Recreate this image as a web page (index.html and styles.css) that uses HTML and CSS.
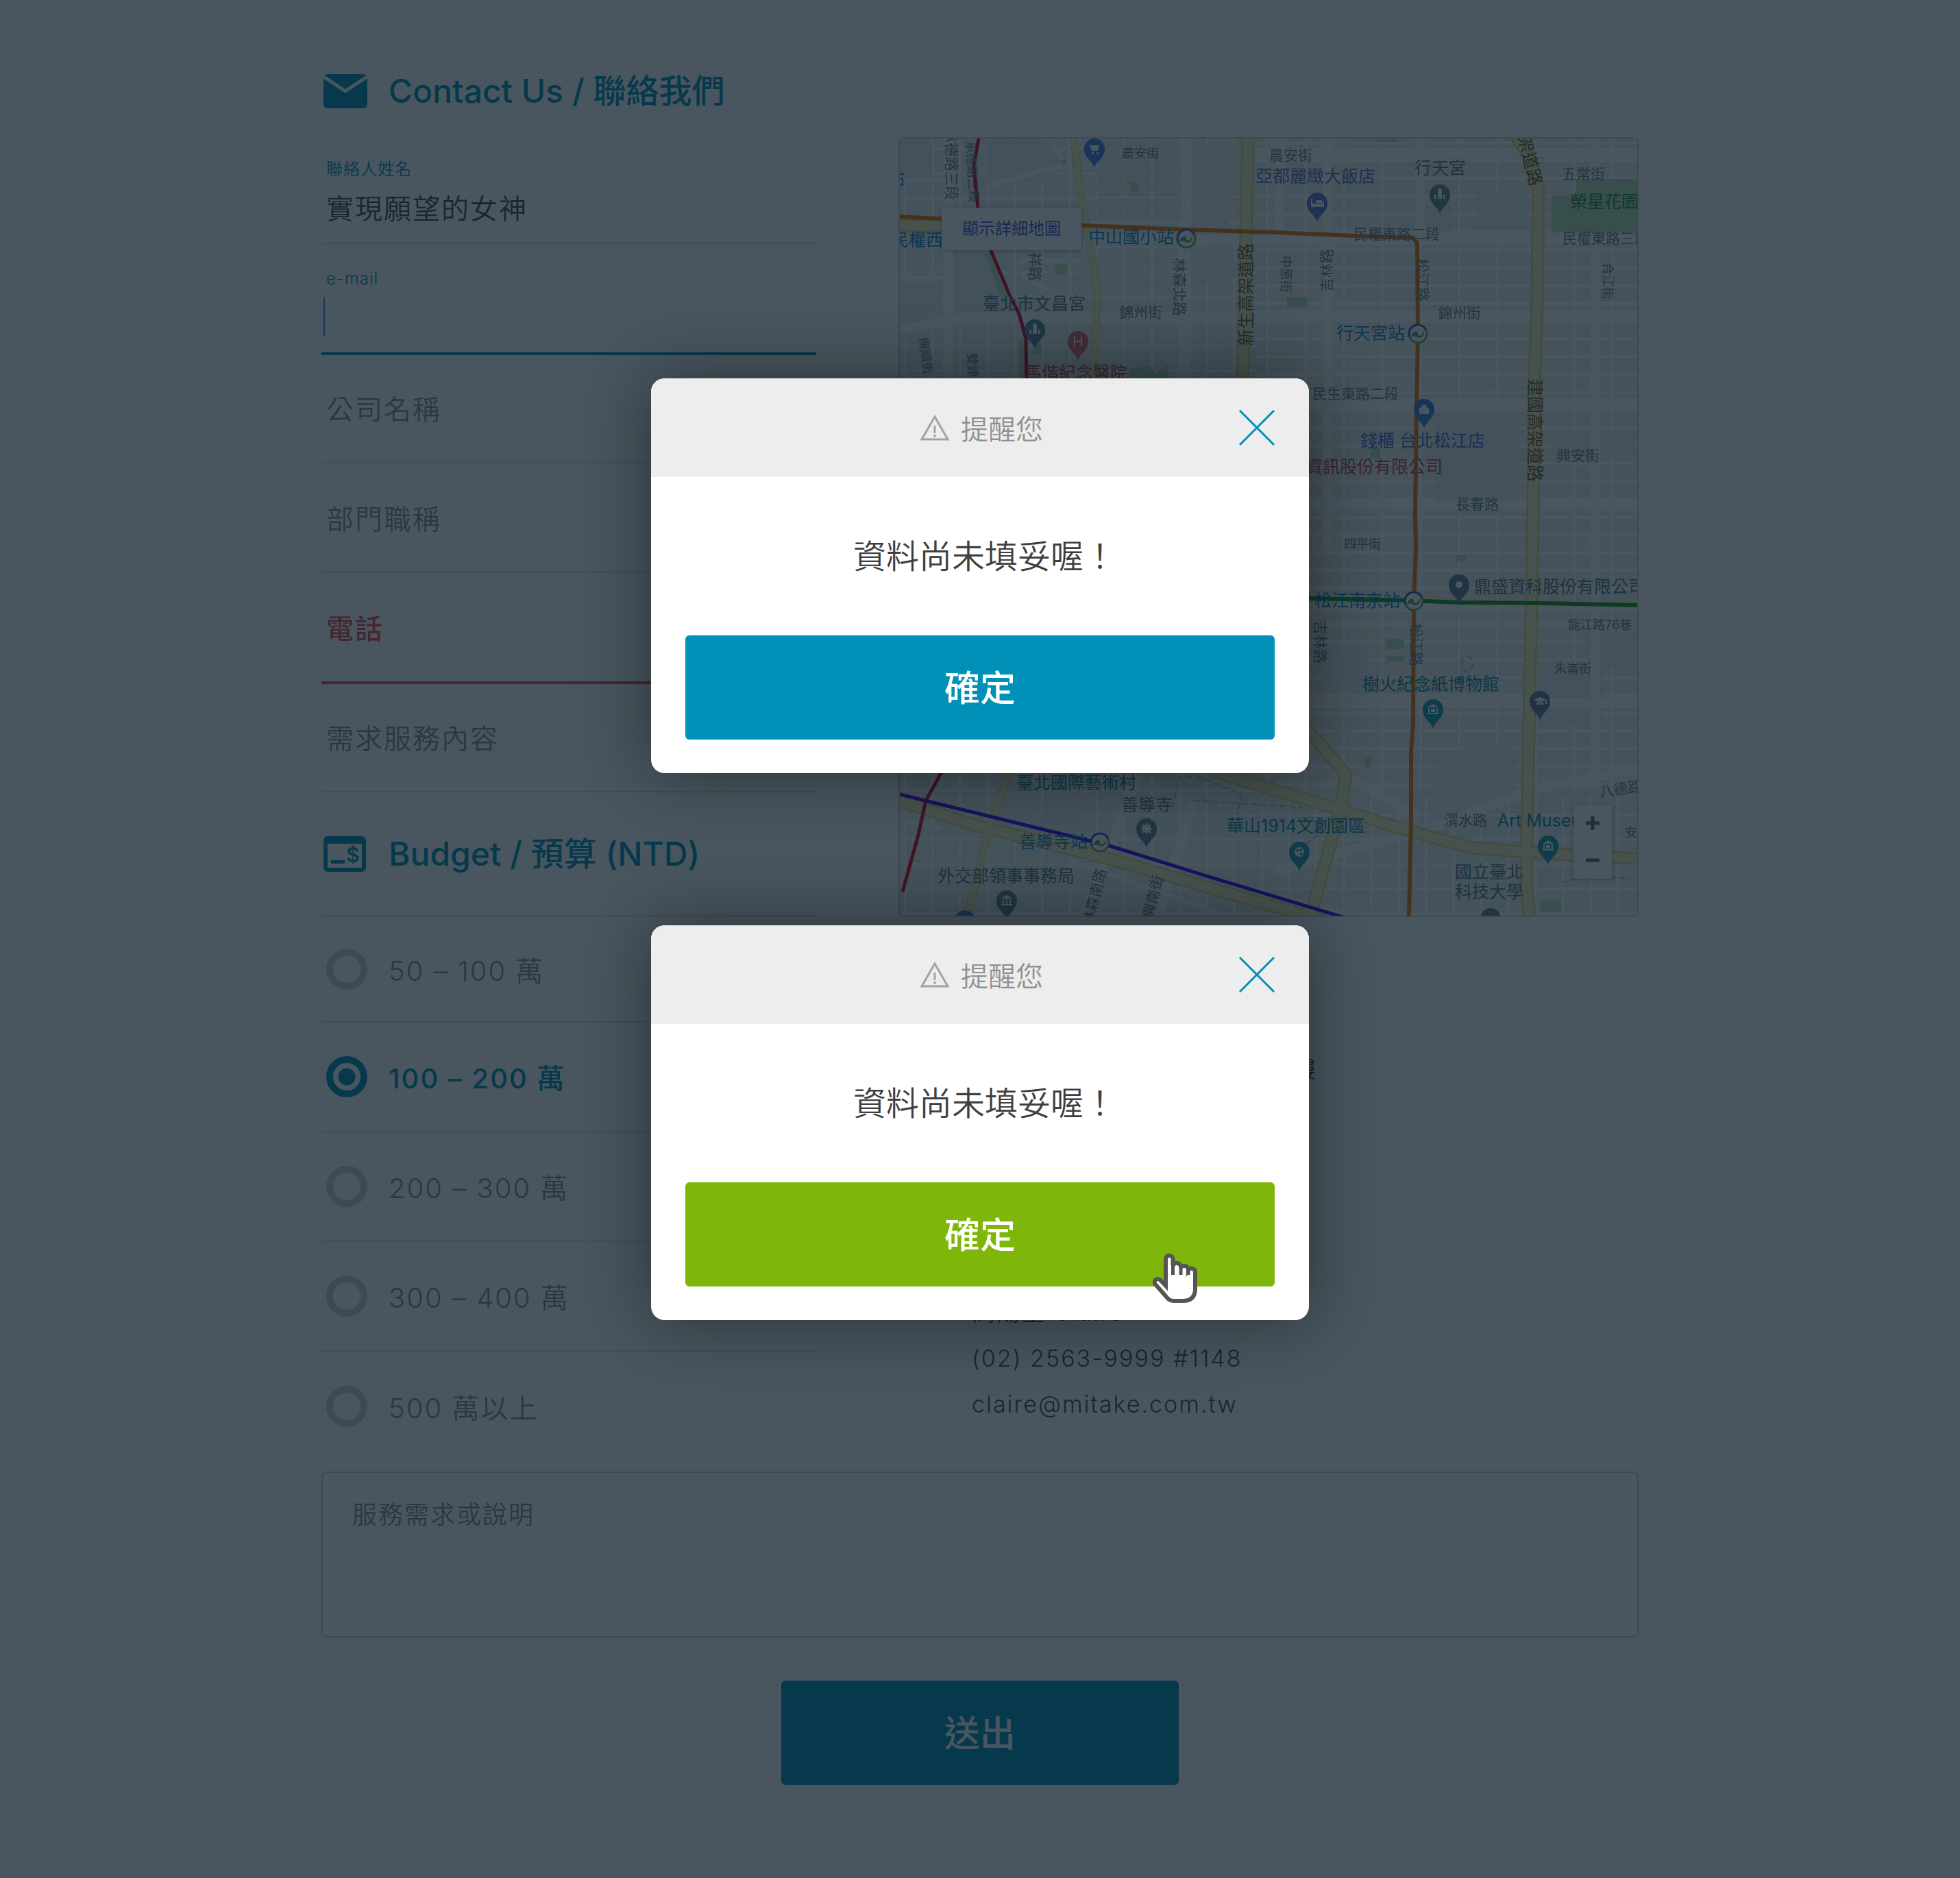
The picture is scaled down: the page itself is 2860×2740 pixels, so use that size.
FILE: index.html
```html
<!DOCTYPE html>
<html lang="zh-Hant">
<head>
<meta charset="utf-8">
<meta name="viewport" content="width=device-width, initial-scale=1">
<title>Contact Us / 聯絡我們</title>
<link rel="stylesheet" href="styles.css">
</head>
<body>
<main class="page">
  <form class="form">
    <div class="columns">
      <div class="column">
        <h1 class="heading">
          <svg class="heading-icon" viewBox="0 0 64 50" width="64" height="50" aria-hidden="true">
            <rect width="64" height="50" rx="6" fill="#0090b8"/>
            <path d="M-1 3 L32 25 L65 3" fill="none" stroke="#fff" stroke-width="5"/>
          </svg>
          <span class="heading-text">Contact Us / 聯絡我們</span>
        </h1>
        <div class="field field--filled">
          <label class="field-label" for="name">聯絡人姓名</label>
          <input class="field-input" id="name" type="text" value="實現願望的女神">
        </div>
        <div class="field field--filled field--active">
          <label class="field-label" for="email">e-mail</label>
          <input class="field-input" id="email" type="email">
        </div>
        <div class="field"><input class="field-input" type="text" aria-label="公司名稱" placeholder="公司名稱"></div>
        <div class="field"><input class="field-input" type="text" aria-label="部門職稱" placeholder="部門職稱"></div>
        <div class="field field--error"><input class="field-input" type="tel" aria-label="電話" placeholder="電話"></div>
        <div class="field"><input class="field-input" type="text" aria-label="需求服務內容" placeholder="需求服務內容"></div>

        <h2 class="heading heading--budget">
          <svg class="heading-icon" viewBox="0 0 64 52" width="64" height="52" aria-hidden="true">
            <path fill="#0090b8" fill-rule="evenodd" d="M6 0h50a6 6 0 0 1 6 6v40a6 6 0 0 1-6 6H6a6 6 0 0 1-6-6V6a6 6 0 0 1 6-6zM6 11v35h50V11z"/>
            <path fill="#0090b8" d="M11 35h20v5H11z"/>
            <text class="icon-dollar" x="43" y="38" text-anchor="middle">$</text>
          </svg>
          <span class="heading-text">Budget / 預算 (NTD)</span>
        </h2>
        <div class="options">
          <label class="option"><input class="radio" type="radio" name="budget">50 – 100 萬</label>
          <label class="option"><input class="radio" type="radio" name="budget" checked>100 – 200 萬</label>
          <label class="option"><input class="radio" type="radio" name="budget">200 – 300 萬</label>
          <label class="option"><input class="radio" type="radio" name="budget">300 – 400 萬</label>
          <label class="option"><input class="radio" type="radio" name="budget">500 萬以上</label>
        </div>
      </div>

      <div class="column column--side">
        <div class="map">
          <svg class="map-canvas" viewBox="1312 201 1076 1134" role="img" aria-label="台北市地圖">
            <defs>
              <pattern id="blocks" width="56" height="26" patternUnits="userSpaceOnUse">
                <rect x="3" y="3" width="50" height="19" fill="#efeee6" stroke="#e4e5e6"/>
              </pattern>
              <pattern id="lots" width="40" height="36" patternUnits="userSpaceOnUse">
                <rect x="3" y="3" width="34" height="30" fill="#eceef0" stroke="#e2e4e8"/>
              </pattern>
              <g id="pin"><path d="M0 28C-2 18-15 14-15 0a15 15 0 0 1 30 0C15 14 2 18 0 28z"/></g>
              <g id="metro">
                <circle r="13" fill="#fff"/>
                <path d="M-12 5A13 13 0 0 1 12-5" fill="none" stroke="#3b5bb5" stroke-width="3"/>
                <path d="M12-5A13 13 0 0 1-12 5" fill="none" stroke="#6ca844" stroke-width="3"/>
                <path d="M-10 5C-8-4 0-6 0 0S8 2 9-6C10 4 4 8-1 5S-7 4-10 5z" fill="#5f9e72"/>
              </g>
            </defs>
            <rect x="1312" y="201" width="1076" height="1134" fill="#fff"/>
            <rect x="1312" y="201" width="520" height="1134" fill="url(#lots)"/>
            <rect x="1600" y="210" width="212" height="110" fill="url(#blocks)"/>
            <rect x="1832" y="201" width="556" height="960" fill="url(#blocks)"/>
            <rect x="1832" y="1150" width="556" height="185" fill="url(#lots)"/>
            <g fill="#e8eaf2" stroke="#dfe2ec">
              <path d="M1312 201h46v56h-46zM1393 368h45l32 75v25h-77zM1440 203h95l22 35-40 22-78 6zM1741 256h50v84h-50zM1733 360h62l8 40-20 10h-50zM1312 412h62v60l-62 22z"/>
              <path d="M2094 601h121v128h-121zM2263 630h122v30h-122zM2247 977h89v79h-89zM2315 922h73v51h-73zM1930 950h66v50h-66zM2075 300h40v36h-40zM2156 282h70v50h-70z"/>
              <path d="M2094 1110 2138 1090h70v70l-70 34h-44z" fill="#ebedef"/>
              <path d="M1455 1135h65l-20 70-48-12zM1525 1160h65l-30 60-45-10z"/>
            </g>
            <g fill="none" stroke="#fff" stroke-width="14">
              <path d="M1382 201V552M1312 480l100-18 170-2 240 2M1580 349h810M1832 458h556M1832 222h556M1730 201V552M1936 201V800M2071 201V340M1832 588h556M1832 736h556M1900 1025h488M1910 885h478M1866 201V350M2388 1120 2240 1150 2090 1206 1860 1270M1960 1130l110 60M1660 1130l-80 205M1740 1170l-50 165M2327 201V1130"/>
              <path d="M1312 262h74M1312 405h74M1440 270l110-30 25-40M1530 202l25 40M1485 380h90M1560 440l-70-40M1832 1300l150 35M1560 1255l230 80M1312 1195l60 12" stroke-width="7"/>
            </g>
            <g fill="#b9dfbb">
              <path d="M2299 260h89v78h-125v-54h36zM1538 385h18v14h-18zM1648 265h12v14h-12zM1877 432h29v16h-29zM2007 201h30v5h-30zM1646 538l30-5 10 12 12-12h6v17l-35 15h-18zM2021 931h27v15h-27zM2021 956h27v8h-27zM1990 1105h9v14h-9zM2124 809h14v8h-14zM2247 1313h30v16h-30zM1999 652h14v15h-14zM1548 232h7v8h-7zM1507 501h12v14h-12z"/>
              <path d="M1440 368l26 70M1490 495v57" fill="none" stroke="#b9dfbb" stroke-width="8"/>
            </g>
            <path d="M1710 1178l10-45h30l60 25-5 30M1740 1167l160 10M1880 1200l20-8h30l4 18-30 20M2132 968c0-14 16-14 16 0s-16 16-16 0M2278 1286l30-6h70" fill="none" stroke="#9bcf9f" stroke-width="2" stroke-dasharray="9 5"/>
            <g fill="none" stroke-linejoin="round">
              <g stroke="#e6cf82">
                <path stroke-width="11" d="M1566 201 1578 300 1596 390 1600 430 1594 560M1473 1120 1443 1207 1410 1335"/>
                <path stroke-width="19" d="M1820 201 1817 350 1812 560M2211 196 2233 233 2244 274 2242 440 2238 554 2236 750 2231 1017 2227 1214 2226 1294 2231 1335M1312 328h66"/>
                <path stroke-width="19" d="M1770 1124 1840 1146 1954 1180 2054 1211 2147 1236 2226 1242 2388 1252M1900 1056 1963 1129 1956 1175 1911 1335M1312 1167 1422 1203 1618 1252 1940 1345"/>
              </g>
              <g stroke="#fbeeb5">
                <path stroke-width="9" d="M1566 201 1578 300 1596 390 1600 430 1594 560M1473 1120 1443 1207 1410 1335"/>
                <path stroke-width="14" d="M1820 201 1817 350 1812 560M2211 196 2233 233 2244 274 2242 440 2238 554 2236 750 2231 1017 2227 1214 2226 1294 2231 1335M1312 328h66"/>
                <path stroke-width="14" d="M1770 1124 1840 1146 1954 1180 2054 1211 2147 1236 2226 1242 2388 1252M1900 1056 1963 1129 1956 1175 1911 1335M1312 1167 1422 1203 1618 1252 1940 1345"/>
              </g>
              <path stroke="#ef7600" stroke-width="6" d="M1312 315 1348 317 1373 318 1580 328 1729 334 1860 338 1976 343 2061 346 2067 354 2068 486 2066 594 2064 750 2065 799 2062 874 2061 1056 2058 1096 2058 1195 2055 1335"/>
              <path stroke="#e0001b" stroke-width="5" d="M1427 201 1420 240 1426 303 1446 367 1471 427 1486 457 1496 493 1497 560M1375 1122 1350 1167 1339 1217 1316 1300"/>
              <path stroke="#3c00f5" stroke-width="5" d="M1312 1158 1353 1168 1545 1215 1618 1233 1769 1280 1965 1339"/>
              <path stroke="#1f9416" stroke-width="6" d="M1900 872 2054 875 2129 878 2247 879 2388 882"/>
            </g>
            <g class="pins">
              <g fill="#3f7fe0"><use href="#pin" x="1596" y="216"/><use href="#pin" x="2077" y="596"/><use href="#pin" x="1407" y="1342"/></g>
              <g fill="#6272c8"><use href="#pin" x="1921" y="295"/></g>
              <g fill="#5f8595"><use href="#pin" x="2100" y="283"/><use href="#pin" x="1509" y="480"/><use href="#pin" x="1672" y="1208"/><use href="#pin" x="1468" y="1313"/></g>
              <g fill="#607d9b"><use href="#pin" x="2128" y="852"/><use href="#pin" x="2246" y="1022"/><use href="#pin" x="2174" y="1339"/></g>
              <g fill="#e0606a"><use href="#pin" x="1572" y="497"/></g>
              <g fill="#1b9bb0"><use href="#pin" x="2090" y="1034"/><use href="#pin" x="2258" y="1233"/><use href="#pin" x="1895" y="1242"/></g>
              <g fill="#fff">
                <path d="M1589 211h14l-2 8h-9zM1592 221h3v3h-3zM1599 221h3v3h-3z"/>
                <path d="M1912 289h2v7h15v-4h2v9h-19zM1919 291h9v4h-9z"/>
                <path d="M2092 283h3v6h-3zM2097 276l3-3 3 3v13h-6zM2105 283h3v6h-3zM1501 480h3v6h-3zM1506 473l3-3 3 3v13h-6zM1514 480h3v6h-3z"/>
                <path d="M2070 594h14v9h-14zM2073 594a4 5 0 0 1 8 0z"/>
                <circle cx="2128" cy="852" r="5"/>
                <path d="M2082 1031l8-5 8 5zM2083 1032h2v8h-2zM2095 1032h2v8h-2zM2082 1039h16v2h-16zM2087 1033h6v5h-6z"/>
                <path d="M2250 1230l8-5 8 5zM2251 1231h2v8h-2zM2263 1231h2v8h-2zM2250 1238h16v2h-16zM2255 1232h6v5h-6z"/>
                <path d="M1460 1310l8-5 8 5zM1462 1311h2v7h-2zM1467 1311h2v7h-2zM1472 1311h2v7h-2zM1460 1318h16v2h-16z"/>
                <path d="M2237 1020l9-4 9 4-9 4zM2241 1023l5 2 5-2v4h-10zM2254 1020h2v6h-2z"/>
                <circle cx="1895" cy="1242" r="7"/>
              </g>
              <g fill="#1b9bb0"><circle cx="1892" cy="1240" r="2"/><circle cx="1897" cy="1239" r="2"/><circle cx="1898" cy="1245" r="2"/></g>
              <path d="M1672 1200v16M1664 1208h16M1666 1202l12 12M1678 1202l-12 12" stroke="#fff" stroke-width="2"/>
              <circle cx="1672" cy="1208" r="5" fill="none" stroke="#fff" stroke-width="2"/>
              <path d="M1567 490v14M1577 490v14M1567 497h10" stroke="#fff" stroke-width="2" fill="none"/>
              <use href="#metro" x="1730" y="347"/><use href="#metro" x="2068" y="486"/><use href="#metro" x="2062" y="876"/><use href="#metro" x="1604" y="1228"/>
            </g>
            <g class="place">
              <text x="2063" y="253">行天宮</text>
              <text x="1433" y="451">臺北市文昌宮</text>
              <text x="2150" y="864">鼎盛資科股份有限公司</text>
              <text x="1635" y="1182">善導寺</text>
              <text x="1367" y="1286">外交部領事事務局</text>
              <text x="2122" y="1280">國立臺北</text>
              <text x="2122" y="1309">科技大學</text>
            </g>
            <g class="place place--hotel"><text x="1831" y="265">亞都麗緻大飯店</text></g>
            <g class="place place--shop"><text x="1984" y="651">錢櫃 台北松江店</text></g>
            <g class="place place--red"><text x="1904" y="689">資訊股份有限公司</text><text x="1494" y="552">馬偕紀念醫院</text></g>
            <g class="place place--park"><text x="2290" y="302">榮星花園</text></g>
            <g class="place place--art">
              <text x="1987" y="1006">樹火紀念紙博物館</text>
              <text x="2184" y="1205">Art Museum</text>
              <text x="1482" y="1150">臺北國際藝術村</text>
              <text x="1789" y="1213">華山1914文創園區</text>
            </g>
            <g class="place place--station">
              <text x="1294" y="268">站</text>
              <text x="1300" y="358">民權西</text>
              <text x="1587" y="354">中山國小站</text>
              <text x="1949" y="494">行天宮站</text>
              <text x="1917" y="884">松江南京站</text>
              <text x="1486" y="1236">善導寺站</text>
            </g>
            <g class="street">
              <text x="1851" y="233">農安街</text>
              <text x="2278" y="260">五常街</text>
              <text x="1974" y="348">民權東路二段</text>
              <text x="2279" y="354">民權東路三段</text>
              <text x="2097" y="463">錦州街</text>
              <text x="1632" y="462">錦州街</text>
              <text x="1914" y="581">民生東路二段</text>
              <text x="2123" y="742">長春路</text>
              <text x="2270" y="671">興安街</text>
              <text x="2106" y="1203">渭水路</text>
              <text transform="translate(2334 1162) rotate(-8)">八德路</text>
              <text transform="translate(1713 376) rotate(90)">林森北路</text>
              <text transform="translate(1942 425) rotate(-90)">吉林路</text>
              <text transform="translate(2067 376) rotate(90)">松江路</text>
              <text transform="translate(1918 904) rotate(90)">吉林路</text>
              <text transform="translate(2058 908) rotate(90)">松江路</text>
              <text transform="translate(1380 186) rotate(90)">承德路三段</text>
              <text transform="translate(1502 367) rotate(90)">祥路</text>
              <text transform="translate(1593 1350) rotate(-76)">林森南路</text>
              <text transform="translate(1676 1360) rotate(-76)">紹興南街</text>
            </g>
            <g class="street street--small">
              <text x="1636" y="229">農安街</text>
              <text x="1960" y="799">四平街</text>
              <text x="2287" y="917">龍江路76巷</text>
              <text x="2267" y="981">朱崙街</text>
              <text x="2370" y="1220">安</text>
              <text transform="translate(1408 205) rotate(86)">承德路三段</text>
              <text transform="translate(1869 372) rotate(90)">中原街</text>
              <text transform="translate(2339 382) rotate(90)">合江街</text>
              <text transform="translate(1340 492) rotate(82)">撫順街</text>
              <text transform="translate(1411 514) rotate(88)">雙連街</text>
            </g>
            <g class="highway">
              <text transform="translate(1826 504) rotate(-90)">新生高架道路</text>
              <text transform="translate(2230 552) rotate(90)">建國高架道路</text>
              <text transform="translate(2214 199) rotate(76)">架道路</text>
            </g>
          </svg>
          <a class="map-link" href="#map">顯示詳細地圖</a>
          <div class="map-zoom">
            <button class="map-zoom-button" type="button" aria-label="放大"><svg viewBox="0 0 22 22" width="22" height="22"><path d="M11 1v20M1 11h20" stroke="#666" stroke-width="5"/></svg></button>
            <button class="map-zoom-button" type="button" aria-label="縮小"><svg viewBox="0 0 22 22" width="22" height="22"><path d="M1 11h20" stroke="#666" stroke-width="5"/></svg></button>
          </div>
        </div>
        <address class="contact">
          <p class="contact-line contact-line--address">台北市中山區民權東路二段十樓</p>
          <p class="contact-line">高陽堂 Claire</p>
          <p class="contact-line">(02) 2563-9999 #1148</p>
          <p class="contact-line">claire@mitake.com.tw</p>
        </address>
      </div>
    </div>
    <textarea class="message" aria-label="服務需求或說明" placeholder="服務需求或說明"></textarea>
    <button class="submit" type="submit">送出</button>
  </form>
</main>

<div class="overlay">
  <section class="dialog" role="dialog" aria-labelledby="dialog-title-1">
    <header class="dialog-header">
      <h2 class="dialog-title" id="dialog-title-1">
        <svg viewBox="0 0 44 40" width="44" height="40" aria-hidden="true"><path d="M22 4 41 37H3z" fill="none" stroke="#a3a3a3" stroke-width="3"/><path d="M22 17v11M22 30v4" stroke="#a3a3a3" stroke-width="3"/></svg>
        提醒您
      </h2>
      <button class="dialog-close" type="button" aria-label="關閉"><svg viewBox="0 0 52 52" width="52" height="52"><path d="M1 1 51 51M51 1 1 51" stroke="#0090b8" stroke-width="3"/></svg></button>
    </header>
    <p class="dialog-text">資料尚未填妥喔！</p>
    <button class="dialog-confirm" type="button">確定</button>
  </section>
  <section class="dialog" role="dialog" aria-labelledby="dialog-title-2">
    <header class="dialog-header">
      <h2 class="dialog-title" id="dialog-title-2">
        <svg viewBox="0 0 44 40" width="44" height="40" aria-hidden="true"><path d="M22 4 41 37H3z" fill="none" stroke="#a3a3a3" stroke-width="3"/><path d="M22 17v11M22 30v4" stroke="#a3a3a3" stroke-width="3"/></svg>
        提醒您
      </h2>
      <button class="dialog-close" type="button" aria-label="關閉"><svg viewBox="0 0 52 52" width="52" height="52"><path d="M1 1 51 51M51 1 1 51" stroke="#0090b8" stroke-width="3"/></svg></button>
    </header>
    <p class="dialog-text">資料尚未填妥喔！</p>
    <button class="dialog-confirm dialog-confirm--hover" type="button">確定</button>
    <svg class="pointer" viewBox="0 0 66 72" width="66" height="72" aria-hidden="true">
      <path d="M19 47 10.500 38 A4.800 4.800 0 0 0 3.600 44.500 L22 65.500 Q25.500 69 31 69 H44 Q62 69 62 51 V27.500 A5.500 5.500 0 0 0 52 24 A6 6 0 0 0 41 20.500 A6 6 0 0 0 29.500 17.500 V8 A5.200 5.200 0 0 0 19 8 Z" fill="#fff" stroke="#555" stroke-width="6"/>
      <path d="M29.500 16V31M41 20V31M52 23V31" stroke="#555" stroke-width="5"/>
    </svg>
  </section>
</div>
</body>
</html>
```
FILE: styles.css
```css
:root {
  --blue: #0090b8;
  --green: #7eb60a;
  --red: #f5414a;
  --text: #464646;
  --muted: #8c8c8c;
  --line: #e0e0e0;
  --border: #d0d0d0;
}

* {
  box-sizing: border-box;
}

body {
  position: relative;
  margin: 0;
  background: #fff;
  color: var(--text);
  font-family: Inter, "Noto Sans CJK TC", sans-serif;
  font-weight: 350;
}

input,
textarea,
button {
  font: inherit;
  letter-spacing: inherit;
}

.page {
  max-width: 1922px;
  margin: 0 auto;
  padding-bottom: 136px;
}

.form {
  display: flex;
  flex-direction: column;
}

.columns {
  display: grid;
  grid-template-columns: 722fr 1080fr;
  gap: 120px;
}

.column--side {
  padding-top: 200px;
}

/* Section headings */

.heading {
  display: flex;
  align-items: center;
  gap: 31px;
  height: 196px;
  margin: 0;
  padding: 70px 0 0 3px;
  color: var(--blue);
  font-size: 48px;
  font-weight: 500;
}

.heading-text {
  padding-bottom: 8px;
}

.heading--budget {
  height: 181px;
  padding-top: 0;
  border-bottom: 2px solid var(--line);
}

.icon-dollar {
  fill: var(--blue);
  font-size: 30px;
  font-weight: 600;
}

/* Text fields */

.field {
  display: flex;
  flex-direction: column;
  justify-content: center;
  height: 160px;
  padding-top: 4px;
  border-bottom: 2px solid var(--line);
}

.field--filled {
  justify-content: flex-start;
  gap: 10px;
  padding-top: 35px;
}

.field-label {
  padding-left: 7px;
  color: var(--blue);
  font-size: 24px;
  line-height: 32px;
  letter-spacing: 1px;
}

.field-input {
  height: 58px;
  margin-left: 3px;
  padding: 0 0 0 2px;
  border: 0;
  border-left: 2px solid transparent;
  outline: 0;
  background: none;
  color: var(--text);
  font-size: 40px;
  letter-spacing: 2px;
}

.field-input::placeholder,
.message::placeholder {
  color: var(--muted);
  opacity: 1;
}

.field--active {
  border-color: var(--blue);
  box-shadow: 0 2px 0 var(--blue);
}

.field--active .field-input {
  border-left-color: #4a90e2;
}

.field--error {
  border-color: var(--red);
  box-shadow: 0 2px 0 var(--red);
}

.field--error .field-input::placeholder {
  color: var(--red);
  font-weight: 500;
}

/* Budget options */

.option {
  display: flex;
  align-items: center;
  gap: 31px;
  height: 160px;
  padding-left: 7px;
  border-bottom: 2px solid var(--line);
  color: var(--muted);
  font-size: 40px;
  letter-spacing: 2px;
}

.option:first-child {
  height: 155px;
}

.option:last-child {
  border-bottom: 0;
}

.option:has(:checked) {
  color: var(--blue);
  font-weight: 500;
}

.radio {
  width: 60px;
  height: 60px;
  margin: 0;
  border: 10px solid var(--border);
  border-radius: 50%;
  appearance: none;
}

.radio:checked {
  border-color: var(--blue);
  background: radial-gradient(circle, var(--blue) 12px, transparent 13px);
}

/* Map */

.map {
  position: relative;
  overflow: hidden;
  border: 2px solid var(--border);
  border-radius: 8px;
}

.map-canvas {
  display: block;
  width: 100%;
}

.place {
  fill: #5b7482;
  font-size: 25px;
  font-weight: 400;
}

.place--hotel { fill: #5a6bc0; }
.place--shop { fill: #3f6fd0; }
.place--red { fill: #c8404a; }
.place--park { fill: #1f8a3a; }
.place--art { fill: #1487a0; }
.place--station { fill: #1584c8; }

.street {
  fill: #6f7b86;
  font-size: 21px;
  font-weight: 400;
}

.street--small {
  font-size: 18px;
}

.highway {
  fill: #6b5a2a;
  font-size: 25px;
  font-weight: 400;
}

.map-link {
  position: absolute;
  top: 101px;
  left: 61px;
  width: 204px;
  border-radius: 4px;
  background: #fff;
  box-shadow: 0 1px 6px rgba(0, 0, 0, .3);
  color: #4254d0;
  font-size: 24px;
  font-weight: 400;
  line-height: 62px;
  text-align: center;
  text-decoration: none;
}

.map-zoom {
  position: absolute;
  right: 37px;
  bottom: 54px;
  display: flex;
  flex-direction: column;
  width: 56px;
  border-radius: 4px;
  background: #fff;
  box-shadow: 0 1px 6px rgba(0, 0, 0, .3);
}

.map-zoom-button {
  display: flex;
  align-items: center;
  justify-content: center;
  height: 54px;
  padding: 0;
  border: 0;
  background: none;
}

/* Contact details */

.contact {
  margin-top: 188px;
  padding-left: 107px;
  font-size: 34px;
  font-style: normal;
  line-height: 67px;
  letter-spacing: 2px;
}

.contact-line {
  margin: 0;
}

.contact-line--address {
  margin-bottom: 288px;
}

/* Message and submit */

.message {
  height: 242px;
  margin-top: 15px;
  padding: 32px 43px;
  border: 2px solid var(--border);
  border-radius: 6px;
  background: none;
  font-size: 36px;
  letter-spacing: 2px;
  resize: none;
}

.submit {
  align-self: center;
  width: 580px;
  height: 152px;
  margin-top: 63px;
  padding: 0 0 6px;
  border: 0;
  border-radius: 6px;
  background: var(--blue);
  color: #fff;
  font-size: 52px;
  font-weight: 500;
}

/* Dialogs */

.overlay {
  position: absolute;
  inset: 0;
  display: flex;
  flex-direction: column;
  align-items: center;
  gap: 222px;
  padding-top: 552px;
  background: rgba(10, 27, 39, .74);
}

.dialog {
  position: relative;
  display: flex;
  flex-direction: column;
  width: 960px;
  max-width: 100%;
  padding-bottom: 49px;
  border-radius: 20px;
  background: #fff;
  box-shadow: 0 0 100px rgba(0, 0, 0, .44);
}

.dialog-header {
  display: grid;
  grid-template-columns: 1fr auto 1fr;
  align-items: center;
  height: 144px;
  padding: 0 50px;
  border-radius: 20px 20px 0 0;
  background: #ededed;
}

.dialog-title {
  display: flex;
  grid-column: 2;
  align-items: center;
  gap: 16px;
  margin: 0;
  padding-left: 4px;
  color: #8f8f8f;
  font-size: 40px;
  font-weight: 350;
}

.dialog-close {
  display: flex;
  justify-self: end;
  padding: 0;
  border: 0;
  background: none;
}

.dialog-text {
  margin: 0;
  padding-left: 14px;
  color: #3f3f3f;
  font-size: 48px;
  line-height: 231px;
  text-align: center;
}

.dialog-confirm {
  height: 152px;
  margin: 0 50px;
  padding: 0 0 6px;
  border: 0;
  border-radius: 6px;
  background: var(--blue);
  color: #fff;
  font-size: 52px;
  font-weight: 500;
}

.dialog-confirm--hover {
  background: var(--green);
}

.pointer {
  position: absolute;
  right: 162px;
  bottom: 25px;
}
```
